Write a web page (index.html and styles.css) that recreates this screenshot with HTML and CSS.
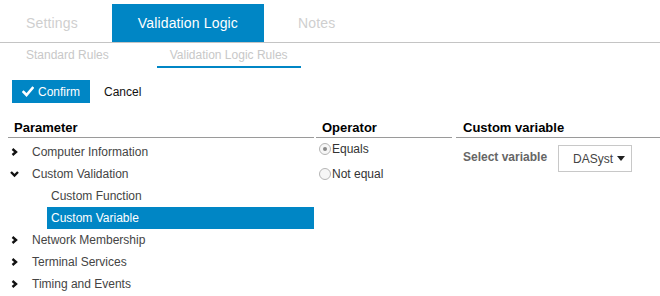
FILE: index.html
```html
<!DOCTYPE html>
<html lang="en">

<head>
    <meta charset="UTF-8">
    <title>Validation Logic</title>
    <link rel="stylesheet" href="styles.css">
</head>

<body>

    <div class="tabs">
        <div class="tab">Settings</div>
        <div class="tab active">Validation Logic</div>
        <div class="tab">Notes</div>
    </div>

    <div class="subtabs">
        <div class="subtab">Standard Rules</div>
        <div class="subtab active">Validation Logic Rules</div>
    </div>

    <div class="toolbar">
        <button class="btn-confirm">
            <svg width="12" height="11" viewBox="0 0 12 11">
                <polyline points="1.5,6 4.5,9 10.5,2" fill="none" stroke="#fff" stroke-width="2.6" stroke-linecap="square"/>
            </svg>
            Confirm
        </button>
        <button class="btn-cancel">Cancel</button>
    </div>

    <div class="columns">
        <!-- 参数树 -->
        <div class="col col-param">
            <div class="col-head">Parameter</div>
            <ul class="tree">
                <li class="row"><span class="chev"><svg width="9" height="8" viewBox="0 0 9 8"><polyline points="2.5,1 6,4 2.5,7" fill="none" stroke="#111" stroke-width="2.4"/></svg></span>Computer Information</li>
                <li class="row"><span class="chev"><svg width="9" height="8" viewBox="0 0 9 8"><polyline points="1,2 4.5,5.5 8,2" fill="none" stroke="#111" stroke-width="2.4"/></svg></span>Custom Validation</li>
                <li class="row child">Custom Function</li>
                <li class="row child selected">Custom Variable</li>
                <li class="row"><span class="chev"><svg width="9" height="8" viewBox="0 0 9 8"><polyline points="2.5,1 6,4 2.5,7" fill="none" stroke="#111" stroke-width="2.4"/></svg></span>Network Membership</li>
                <li class="row"><span class="chev"><svg width="9" height="8" viewBox="0 0 9 8"><polyline points="2.5,1 6,4 2.5,7" fill="none" stroke="#111" stroke-width="2.4"/></svg></span>Terminal Services</li>
                <li class="row"><span class="chev"><svg width="9" height="8" viewBox="0 0 9 8"><polyline points="2.5,1 6,4 2.5,7" fill="none" stroke="#111" stroke-width="2.4"/></svg></span>Timing and Events</li>
            </ul>
        </div>

        <!-- 运算符 -->
        <div class="col col-op">
            <div class="col-head">Operator</div>
            <div class="radios">
                <label class="radio"><span class="dot checked"></span>Equals</label>
                <label class="radio"><span class="dot"></span>Not equal</label>
            </div>
        </div>

        <!-- 自定义变量 -->
        <div class="col col-var">
            <div class="col-head">Custom variable</div>
            <div class="var-row">
                <span class="var-label">Select variable</span>
                <div class="select">DASyst <span class="caret"></span></div>
            </div>
        </div>
    </div>

</body>

</html>
```

FILE: styles.css
```css
body {
    font-family: "Liberation Sans", Arial, sans-serif;
    background-color: #fff;
    margin: 0;
    padding: 0;
    color: #333;
}

.tabs {
    display: flex;
    margin-top: 4px;
    border-bottom: 1px solid #c4c4c4;
}

.tab {
    height: 38px;
    line-height: 38px;
    padding: 0 26px;
    margin-right: 8px;
    font-size: 14px;
    letter-spacing: 0.15px;
    color: #cfcfcf;
}

.tab.active {
    background-color: #0086c5;
    color: #fff;
}

.subtabs {
    display: flex;
    gap: 35px;
    padding-left: 13px;
}

.subtab {
    height: 23px;
    line-height: 24px;
    padding: 0 13px;
    font-size: 12px;
    color: #c8c8c8;
    border-bottom: 2px solid transparent;
}

.subtab.active {
    border-bottom-color: #0086c5;
}

.toolbar {
    display: flex;
    align-items: center;
    gap: 14px;
    padding: 12px 12px 0;
}

.toolbar button {
    font-family: inherit;
    font-size: 12px;
    border: none;
    cursor: pointer;
}

.btn-confirm {
    display: flex;
    align-items: center;
    gap: 4px;
    width: 78px;
    height: 23px;
    padding: 0 0 0 10px;
    background-color: #0086c5;
    color: #fff;
}

.btn-cancel {
    background: none;
    color: #111;
    padding: 0;
}

.columns {
    display: flex;
    gap: 2px;
    margin-top: 17px;
    padding-left: 8px;
}

.col-head {
    font-size: 13px;
    font-weight: bold;
    color: #000;
    padding: 0 0 2px 6px;
    border-bottom: 1px solid #9a9a9a;
}

.col-param {
    width: 306px;
}

.col-op {
    width: 136px;
}

.col-var {
    flex: 1;
    margin-left: 2px;
}

.col-var .col-head {
    padding-left: 7px;
}

.tree {
    list-style-type: none;
    margin: 3px 0 0;
    padding: 0;
}

.row {
    display: flex;
    align-items: center;
    height: 22px;
    font-size: 12px;
    color: #444;
    padding-left: 2px;
}

.chev {
    display: inline-flex;
    width: 22px;
}

.row.child {
    margin-left: 39px;
    padding-left: 4px;
}

.row.selected {
    background-color: #0086c5;
    color: #fff;
}

.radios {
    display: flex;
    flex-direction: column;
    gap: 3px;
    padding-left: 3px;
}

.radio {
    display: flex;
    align-items: center;
    height: 22px;
    font-size: 12px;
    color: #333;
}

.dot {
    width: 10px;
    height: 10px;
    border: 1px solid #b5b5b5;
    border-radius: 50%;
    margin-right: 1px;
    position: relative;
    background-color: #f6f6f6;
}

.dot.checked::after {
    content: "";
    position: absolute;
    left: 3px;
    top: 3px;
    width: 4px;
    height: 4px;
    border-radius: 50%;
    background-color: #888;
}

.var-row {
    display: flex;
    align-items: flex-start;
    gap: 11px;
    padding: 7px 0 0 7px;
}

.var-label {
    margin-top: 5px;
    font-size: 12px;
    font-weight: bold;
    color: #666;
}

.select {
    display: flex;
    align-items: center;
    gap: 4px;
    box-sizing: border-box;
    width: 74px;
    height: 27px;
    padding-left: 14px;
    border: 1px solid #c8c8c8;
    font-size: 12px;
    color: #444;
}

.caret {
    width: 0;
    height: 0;
    border-left: 4px solid transparent;
    border-right: 4px solid transparent;
    border-top: 5px solid #222;
}
```
